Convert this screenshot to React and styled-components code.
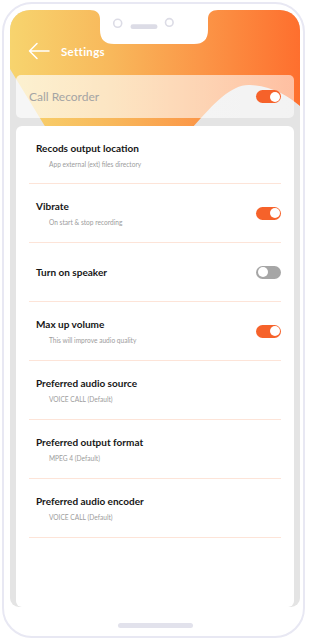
import React from "react";
import styled, { createGlobalStyle } from "styled-components";

const GlobalStyle = createGlobalStyle`
  html, body {
    margin: 0;
    padding: 0;
    background: #fff;
  }
  body {
    font-family: "Lato", "Noto Sans", sans-serif;
  }
  * {
    box-sizing: border-box;
  }
`;

const settings = [
  { title: "Recods output location", sub: "App external (ext) files directory" },
  { title: "Vibrate", sub: "On start & stop recording", toggle: true, on: true },
  { title: "Turn on speaker", toggle: true, on: false },
  { title: "Max up volume", sub: "This will improve audio quality", toggle: true, on: true },
  { title: "Preferred audio source", sub: "VOICE CALL (Default)" },
  { title: "Preferred output format", sub: "MPEG 4 (Default)" },
  { title: "Preferred audio encoder", sub: "VOICE CALL (Default)" },
];

function BackArrow() {
  return (
    <svg width="22" height="18" viewBox="0 0 22 18" fill="none">
      <path
        d="M21 9H1.5M9 1.5L1.5 9L9 16.5"
        stroke="#fff"
        strokeWidth="1.5"
        strokeLinecap="round"
        strokeLinejoin="round"
      />
    </svg>
  );
}

function HeaderShape() {
  return (
    <Blob viewBox="0 0 290 130" preserveAspectRatio="none">
      <defs>
        <linearGradient id="hdr" x1="0" y1="0" x2="1" y2="0">
          <stop offset="0" stopColor="#f7d46e" />
          <stop offset="0.35" stopColor="#f8b85b" />
          <stop offset="0.65" stopColor="#fb9748" />
          <stop offset="1" stopColor="#fe6f2e" />
        </linearGradient>
      </defs>
      <path
        d="M0 0H290V96C278 86 262 76 240 75C222 74 205 92 182 118H36L0 59Z"
        fill="url(#hdr)"
      />
    </Blob>
  );
}

function Notch() {
  return (
    <NotchSvg width="128" height="36" viewBox="0 0 128 36">
      <path
        d="M0 0C6 0 10 3 10 9V20Q10 34 24 34H104Q118 34 118 20V9C118 3 122 0 128 0Z"
        fill="#fff"
      />
      <circle cx="27.7" cy="13.3" r="4" stroke="#dcdce6" strokeWidth="1.6" fill="none" />
      <rect x="40.5" y="14.3" width="27" height="4.8" rx="2.4" fill="#dcdce6" />
      <circle cx="79.3" cy="12.4" r="3.8" stroke="#dcdce6" strokeWidth="1.6" fill="none" />
    </NotchSvg>
  );
}

export default function App() {
  return (
    <>
      <GlobalStyle />
      <Page>
        <Phone>
          <Screen>
            <HeaderShape />
            <Notch />
            <Header>
              <BackArrow />
              <HeaderTitle>Settings</HeaderTitle>
            </Header>
            <RecorderCard>
              <RecorderLabel>Call Recorder</RecorderLabel>
              <Toggle $on />
            </RecorderCard>
            <SettingsCard>
              {settings.map((s) => (
                <Row key={s.title}>
                  <RowText>
                    <RowTitle>{s.title}</RowTitle>
                    {s.sub && <RowSub>{s.sub}</RowSub>}
                  </RowText>
                  {s.toggle && <Toggle $on={s.on} />}
                </Row>
              ))}
            </SettingsCard>
          </Screen>
          <HomeArea>
            <HomeBar />
          </HomeArea>
        </Phone>
      </Page>
    </>
  );
}

const Page = styled.div`
  padding: 2px 0 0 2px;
  width: 312px;
  height: 640px;
`;

const Phone = styled.div`
  width: 303px;
  height: 636px;
  border: 2px solid #e8e8f3;
  border-radius: 30px;
  padding: 6px 3px 0 6px;
  display: flex;
  flex-direction: column;
`;

const Screen = styled.div`
  position: relative;
  height: 597px;
  background: #e4e4e4;
  border-radius: 20px 20px 9px 9px;
  overflow: hidden;
  display: flex;
  flex-direction: column;
`;

const Blob = styled.svg`
  position: absolute;
  top: 0;
  left: 0;
  width: 290px;
  height: 130px;
`;

const NotchSvg = styled.svg`
  position: absolute;
  top: 0;
  left: 80px;
`;

const Header = styled.div`
  position: relative;
  display: flex;
  align-items: center;
  gap: 11px;
  height: 20px;
  margin: 31px 0 14px;
  padding-left: 18px;
`;

const HeaderTitle = styled.span`
  color: #fff;
  font-weight: 700;
  font-size: 11.5px;
  letter-spacing: 0.3px;
`;

const RecorderCard = styled.div`
  position: relative;
  height: 43px;
  margin: 0 6px;
  border-radius: 5px;
  background: linear-gradient(
    90deg,
    rgba(255, 255, 255, 0.68),
    rgba(255, 255, 255, 0.55)
  );
  display: flex;
  align-items: center;
  justify-content: space-between;
  padding: 0 13px 0 13px;
`;

const RecorderLabel = styled.span`
  color: #a4a4a4;
  font-size: 12px;
`;

const SettingsCard = styled.div`
  position: relative;
  flex: 1;
  margin: 8px 6px 0;
  background: #fff;
  border-radius: 6px;
  padding: 0 13px;
`;

const Row = styled.div`
  height: 59px;
  border-bottom: 1px solid #fde4d8;
  display: flex;
  align-items: center;
  justify-content: space-between;
  padding-left: 7px;

  &:first-child {
    height: 58px;
  }
`;

const RowText = styled.div`
  display: flex;
  flex-direction: column;
`;

const RowTitle = styled.span`
  color: #161616;
  font-weight: 700;
  font-size: 10px;
  line-height: 14px;
`;

const RowSub = styled.span`
  color: #9c9c9c;
  font-size: 6.6px;
  line-height: 9px;
  margin-top: 5px;
  padding-left: 13px;
`;

const Toggle = styled.span`
  position: relative;
  flex: none;
  width: 25px;
  height: 13px;
  border-radius: 7px;
  background: ${(p) => (p.$on ? "#f6622a" : "#a6a6a6")};

  &::after {
    content: "";
    position: absolute;
    top: 1.5px;
    left: ${(p) => (p.$on ? "13.5px" : "1.5px")};
    width: 10px;
    height: 10px;
    border-radius: 50%;
    background: #fff;
  }
`;

const HomeArea = styled.div`
  flex: 1;
  display: flex;
  justify-content: center;
  padding-top: 16px;
`;

const HomeBar = styled.div`
  width: 75px;
  height: 5px;
  border-radius: 3px;
  background: #e2e2ec;
`;
